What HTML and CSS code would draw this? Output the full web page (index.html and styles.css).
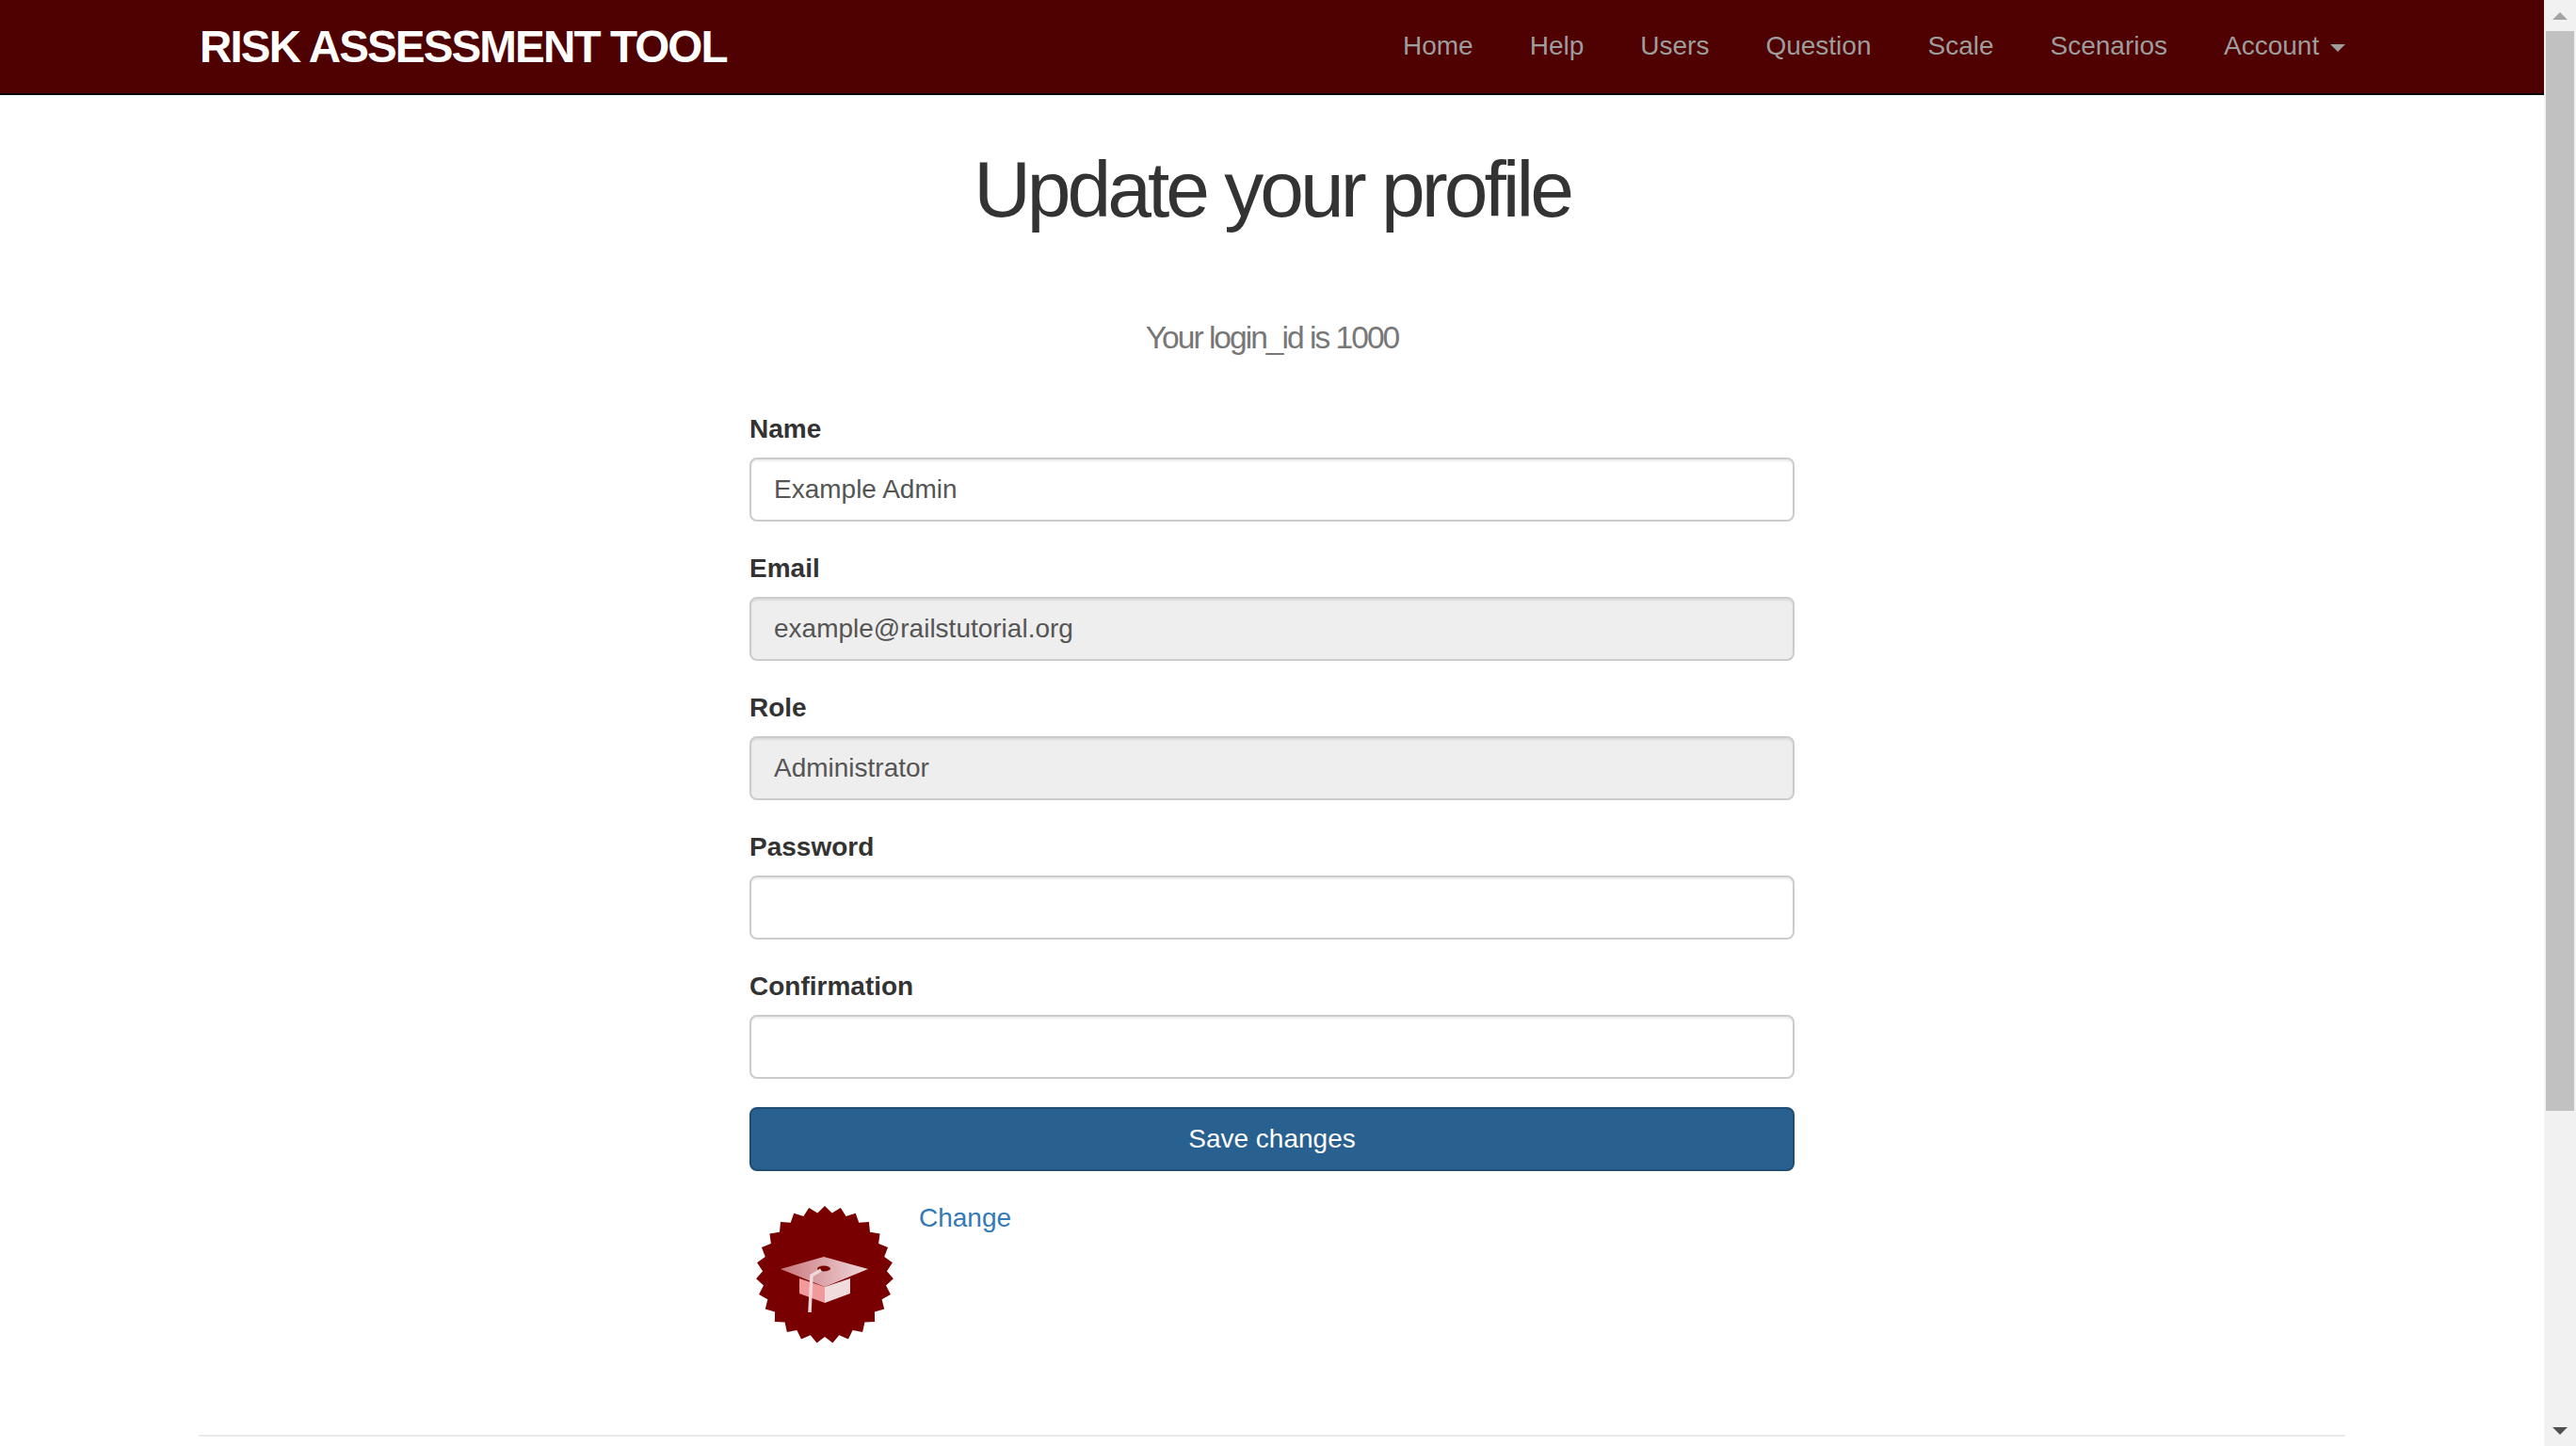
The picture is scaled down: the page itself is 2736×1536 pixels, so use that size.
FILE: index.html
```html
<!DOCTYPE html>
<html lang="en">
<head>
    <meta charset="UTF-8">
    <title>Update your profile | Risk Assessment Tool</title>
    <link rel="stylesheet" href="styles.css">
</head>
<body>

    <div class="page">
        <!-- Navbar -->
        <header class="navbar">
            <div class="container navbar-inner">
                <a class="logo" href="#">Risk Assessment Tool</a>
                <nav class="nav-links">
                    <a href="#">Home</a>
                    <a href="#">Help</a>
                    <a href="#">Users</a>
                    <a href="#">Question</a>
                    <a href="#">Scale</a>
                    <a href="#">Scenarios</a>
                    <a href="#">Account <span class="caret"></span></a>
                </nav>
            </div>
        </header>

        <div class="container">
            <h1>Update your profile</h1>
            <h2>Your login_id is 1000</h2>

            <!-- Profile form -->
            <form class="profile-form">
                <label for="name">Name</label>
                <input id="name" class="form-control" type="text" value="Example Admin">

                <label for="email">Email</label>
                <input id="email" class="form-control" type="text" value="example@railstutorial.org" disabled>

                <label for="role">Role</label>
                <input id="role" class="form-control" type="text" value="Administrator" disabled>

                <label for="password">Password</label>
                <input id="password" class="form-control" type="password">

                <label for="confirmation">Confirmation</label>
                <input id="confirmation" class="form-control" type="password">

                <button class="btn-primary" type="button">Save changes</button>

                <div class="avatar-row">
                    <svg class="avatar" viewBox="0 0 160 160" width="160" height="160" role="img" aria-label="Avatar">
                        <defs>
                            <linearGradient id="cap-top" x1="0" y1="0" x2="1" y2="0">
                                <stop offset="0" stop-color="#c9767c"/>
                                <stop offset="1" stop-color="#f0d8da"/>
                            </linearGradient>
                        </defs>
                        <polygon transform="translate(80 80)" fill="#780000" points="0,-73 7.66,-65.55 16.84,-71.03 22.57,-62.02 32.76,-65.23 36.27,-55.14 46.92,-55.92 48.01,-45.29 58.55,-43.6 57.16,-33 67.03,-28.92 63.23,-18.93 71.89,-12.68 65.89,-3.84 72.88,4.24 65,11.46 69.93,20.94 60.6,26.14 63.22,36.5 52.94,39.42 53.1,50.09 42.42,50.56 40.11,60.99 29.62,58.98 24.97,68.6 15.22,64.22 8.48,72.5 0,66 -8.48,72.5 -15.22,64.22 -24.97,68.6 -29.62,58.98 -40.11,60.99 -42.42,50.56 -53.1,50.09 -52.94,39.42 -63.22,36.5 -60.6,26.14 -69.93,20.94 -65,11.46 -72.88,4.24 -65.89,-3.84 -71.89,-12.68 -63.23,-18.93 -67.03,-28.92 -57.16,-33 -58.55,-43.6 -48.01,-45.29 -46.92,-55.92 -36.27,-55.14 -32.76,-65.23 -22.57,-62.02 -16.84,-71.03 -7.66,-65.55"/>
                        <polygon points="53,84 80,93 80,110 53,100" fill="#f09a9c"/>
                        <polygon points="80,93 107,84 107,100 80,110" fill="#f0dcdc"/>
                        <polygon points="33,74 79,61 126,74 80,93" fill="url(#cap-top)"/>
                        <ellipse cx="79" cy="73.5" rx="7" ry="3" fill="#780000"/>
                        <path d="M76 75 L66 81 L64 120" fill="none" stroke="#f0d8da" stroke-width="3.5"/>
                    </svg>
                    <a class="change-link" href="#">Change</a>
                </div>
            </form>

            <footer class="footer"></footer>
        </div>
    </div>

    <!-- Scrollbar -->
    <div class="scrollbar">
        <div class="scroll-btn"><span class="arrow-up"></span></div>
        <div class="scroll-thumb"></div>
        <div class="scroll-track"></div>
        <div class="scroll-btn"><span class="arrow-down"></span></div>
    </div>

</body>
</html>
```

FILE: styles.css
```css
/* General Styles */
html, body {
    height: 100%;
}

body {
    margin: 0;
    display: flex;
    height: 100vh;
    overflow: hidden;
    background: #fff;
    color: #333;
    font-family: "Liberation Sans", Arial, sans-serif;
    font-size: 28px;
    line-height: 40px;
}

* {
    box-sizing: border-box;
}

.page {
    flex: 1;
    min-width: 0;
    overflow: hidden;
}

.container {
    width: 2340px;
    margin: 0 auto;
    padding: 0 30px;
}

/* Navbar */
.navbar {
    height: 101px;
    background: #4f0000;
    border-bottom: 2px solid #080808;
}

.navbar-inner {
    display: flex;
    justify-content: space-between;
    height: 99px;
}

.logo {
    margin-left: 1px;
    color: #fff;
    font-size: 47.6px;
    font-weight: bold;
    letter-spacing: -1.9px;
    line-height: 100px;
    text-decoration: none;
    text-transform: uppercase;
}

.nav-links {
    display: flex;
}

.nav-links a {
    margin-left: 60px;
    color: #9d9d9d;
    line-height: 98px;
    text-decoration: none;
}

.caret {
    display: inline-block;
    margin-left: 4px;
    vertical-align: middle;
    border-top: 8px solid #9d9d9d;
    border-left: 8px solid transparent;
    border-right: 8px solid transparent;
}

/* Headings */
h1 {
    margin: 54px 0 0;
    font-size: 84px;
    font-weight: 500;
    line-height: 92px;
    letter-spacing: -4px;
    text-align: center;
}

h2 {
    margin: 93px 0 0;
    color: #777;
    font-size: 33.6px;
    font-weight: normal;
    line-height: 37px;
    letter-spacing: -2px;
    text-align: center;
}

/* Profile form */
.profile-form {
    width: 1110px;
    margin: 59px auto 0;
}

label {
    display: block;
    margin-bottom: 10px;
    font-weight: bold;
}

.form-control {
    display: block;
    width: 100%;
    height: 68px;
    margin-bottom: 30px;
    padding: 12px 24px;
    background: #fff;
    border: 2px solid #ccc;
    border-radius: 8px;
    box-shadow: inset 0 2px 2px rgba(0, 0, 0, 0.075);
    color: #555;
    font-family: inherit;
    font-size: 28px;
}

.form-control:disabled {
    background: #eee;
    opacity: 1;
}

.btn-primary {
    display: block;
    width: 100%;
    height: 68px;
    background: #286090;
    border: 2px solid #204d74;
    border-radius: 8px;
    color: #fff;
    font-family: inherit;
    font-size: 28px;
}

.avatar-row {
    display: flex;
    gap: 20px;
    margin-top: 30px;
}

.avatar {
    display: block;
}

.change-link {
    color: #337ab7;
    text-decoration: none;
}

.footer {
    margin-top: 90px;
    border-top: 2px solid #eaeaea;
    height: 20px;
}

/* Scrollbar */
.scrollbar {
    display: flex;
    flex-direction: column;
    flex: 0 0 34px;
    background: #f1f1f1;
}

.scroll-btn {
    display: flex;
    align-items: center;
    justify-content: center;
    height: 33px;
}

.arrow-up {
    border-bottom: 8px solid #a3a3a3;
    border-left: 8px solid transparent;
    border-right: 8px solid transparent;
}

.arrow-down {
    border-top: 8px solid #505050;
    border-left: 8px solid transparent;
    border-right: 8px solid transparent;
}

.scroll-thumb {
    height: 1147px;
    margin: 0 2px;
    background: #c1c1c1;
}

.scroll-track {
    flex: 1;
}
```
